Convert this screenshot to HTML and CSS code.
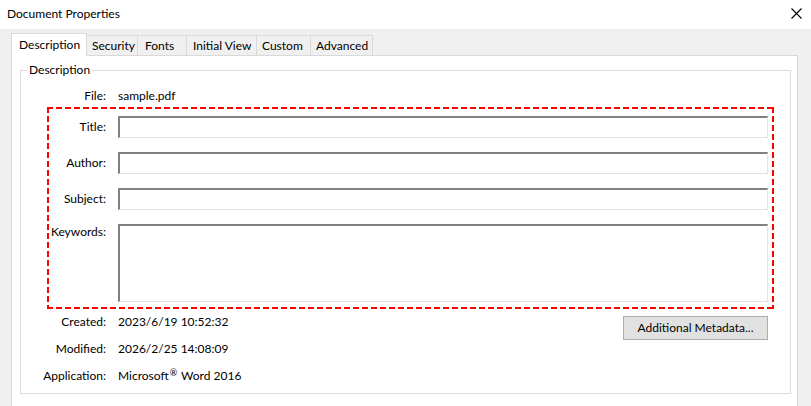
FILE: index.html
```html
<!DOCTYPE html>
<html lang="en">
<head>
<meta charset="utf-8">
<title>Document Properties</title>
<link rel="stylesheet" href="styles.css">
</head>
<body>
<div class="window">
  <div class="titlebar">
    <span class="title">Document Properties</span>
    <span class="close" aria-label="Close">
      <svg width="11" height="11" viewBox="0 0 11 11"><path d="M0.5 0.5 L10.5 10.5 M10.5 0.5 L0.5 10.5" stroke="#000" stroke-width="1.1" fill="none"/></svg>
    </span>
  </div>
  <div class="tabs">
    <div class="tab tab-active tab-desc">Description</div>
    <div class="tab tab-sec">Security</div>
    <div class="tab tab-fonts">Fonts</div>
    <div class="tab tab-view">Initial View</div>
    <div class="tab tab-custom">Custom</div>
    <div class="tab tab-adv">Advanced</div>
  </div>
  <div class="panel">
    <fieldset class="group">
      <legend class="legend">Description</legend>
      <div class="row row-file">
        <span class="label">File:</span>
        <span class="value">sample.pdf</span>
      </div>
      <div class="highlight">
        <div class="field">
          <span class="label">Title:</span>
          <div class="input"></div>
        </div>
        <div class="field">
          <span class="label">Author:</span>
          <div class="input"></div>
        </div>
        <div class="field">
          <span class="label">Subject:</span>
          <div class="input"></div>
        </div>
        <div class="field field-multi">
          <span class="label">Keywords:</span>
          <div class="input input-multi"></div>
        </div>
      </div>
      <div class="row row-meta row-created">
        <span class="label">Created:</span>
        <span class="value">2023/6/19 10:52:32</span>
        <span class="button">Additional Metadata...</span>
      </div>
      <div class="row row-meta">
        <span class="label">Modified:</span>
        <span class="value">2026/2/25 14:08:09</span>
      </div>
      <div class="row row-meta">
        <span class="label">Application:</span>
        <span class="value">Microsoft<sup class="reg">®</sup> Word 2016</span>
      </div>
    </fieldset>
  </div>
</div>
</body>
</html>
```

FILE: styles.css
```css
html, body {
  margin: 0;
  padding: 0;
}
body {
  width: 811px;
  height: 406px;
  overflow: hidden;
  background: #f0f0f0;
  font-family: Lato, "Noto Sans", sans-serif;
  font-size: 12px;
  color: #000;
}
.window {
  display: flex;
  flex-direction: column;
  height: 406px;
}
.titlebar {
  height: 29px;
  background: #fff;
  display: flex;
  align-items: center;
  justify-content: space-between;
  padding: 0 9px 2px 7px;
  box-sizing: border-box;
  flex: none;
}
.title {
  font-size: 12px;
  line-height: 16px;
}
.close {
  display: flex;
  width: 11px;
  height: 11px;
}
.tabs {
  display: flex;
  align-items: flex-end;
  height: 22px;
  margin-top: 4px;
  padding-left: 11px;
  flex: none;
}
.tab {
  box-sizing: border-box;
  height: 20px;
  line-height: 19px;
  padding-left: 6px;
  border-top: 1px solid #d9d9d9;
  border-right: 1px solid #d9d9d9;
  background: #f0f0f0;
  white-space: nowrap;
}
.tab-active {
  position: relative;
  z-index: 1;
  height: 23px;
  margin-bottom: -1px;
  line-height: 21px;
  padding-left: 7px;
  background: #fff;
  border-left: 1px solid #d9d9d9;
}
.tab-desc { width: 76px; }
.tab-sec { width: 51px; padding-left: 5px; }
.tab-fonts { width: 49px; padding-left: 7px; }
.tab-view { width: 70px; padding-left: 6px; }
.tab-custom { width: 54px; padding-left: 5px; }
.tab-adv { width: 62px; padding-left: 5px; }

.panel {
  box-sizing: border-box;
  margin-left: 11px;
  width: 787px;
  flex: 1;
  background: #fff;
  border: 1px solid #d9d9d9;
  border-bottom: none;
  padding: 6px 0 0 8px;
}
.group {
  box-sizing: border-box;
  margin: 0;
  padding: 0;
  width: 771px;
  height: 332px;
  border: 1px solid #dcdcdc;
}
.legend {
  margin-left: 6px;
  padding: 0 2px;
  line-height: 16px;
}
.row {
  display: grid;
  grid-template-columns: 57px 1fr;
  column-gap: 12px;
  padding: 0 22px 0 28px;
  line-height: 16px;
}
.row-file {
  margin-top: 10px;
}
.label {
  justify-self: end;
  text-align: right;
  white-space: nowrap;
}
.value {
  white-space: nowrap;
}
.highlight {
  box-sizing: border-box;
  margin: 3px 0 0 26px;
  width: 727px;
  padding: 9px 6px 7px 2px;
  display: flex;
  flex-direction: column;
  gap: 14px;
  background:
    repeating-linear-gradient(90deg, #ff0000 0 6px, transparent 6px 9px) left top / 100% 2px no-repeat,
    repeating-linear-gradient(90deg, #ff0000 0 6px, transparent 6px 9px) left bottom / 100% 2px no-repeat,
    repeating-linear-gradient(180deg, #ff0000 0 6px, transparent 6px 9px) left top / 2px 100% no-repeat,
    repeating-linear-gradient(180deg, #ff0000 0 6px, transparent 6px 9px) right top / 2px 100% no-repeat;
}
.field {
  display: grid;
  grid-template-columns: 57px 650px;
  column-gap: 12px;
  align-items: start;
}
.field .label {
  line-height: 22px;
}
.field-multi .label {
  line-height: 16px;
}
.input {
  box-sizing: border-box;
  height: 22px;
  background: #fff;
  border-top: 2px solid #808080;
  border-left: 2px solid #808080;
  border-right: 1px solid #e3e3e3;
  border-bottom: 1px solid #e3e3e3;
}
.input-multi {
  height: 78px;
}
.row-meta {
  grid-template-columns: 57px 1fr auto;
  height: 27px;
  align-items: start;
}
.row-created {
  margin-top: 5px;
}
.button {
  box-sizing: border-box;
  margin-top: 2px;
  width: 145px;
  height: 24px;
  line-height: 22px;
  text-align: center;
  background: #e1e1e1;
  border: 1px solid #adadad;
}
.reg {
  font-size: 9px;
  line-height: 0;
  vertical-align: 4px;
  margin-left: 1px;
  margin-right: 1px;
}
```
